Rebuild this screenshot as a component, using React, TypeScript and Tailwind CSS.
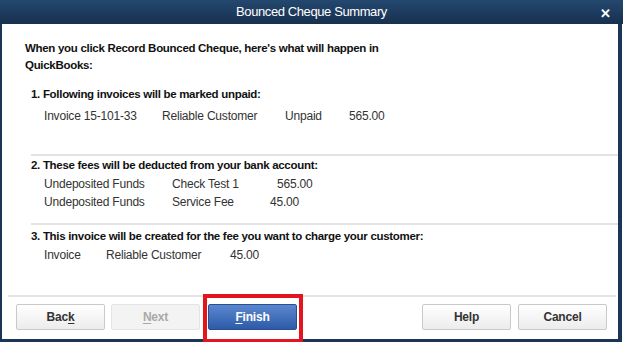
import React from "react";

const font = { fontFamily: '"Liberation Sans", Arial, sans-serif' };

function Btn({ label, u, rest, kind = "normal", className = "" }: { label?: string; u?: string; rest?: string; kind?: "normal" | "disabled" | "primary"; className?: string }) {
  const base = "h-[26px] w-[89px] rounded-[2px] text-[12px] font-bold tracking-[-0.2px] flex items-center justify-center";
  const styles =
    kind === "primary"
      ? "bg-gradient-to-b from-[#5b87cf] to-[#2d5ba8] border border-[#2a4f8f] text-white"
      : kind === "disabled"
      ? "bg-[#f3f3f3] border border-[#e4e4e4] text-[#a9a9a9]"
      : "bg-gradient-to-b from-[#ffffff] to-[#ececec] border border-[#c9c9c9] text-[#333]";
  return (
    <div className={`${base} ${styles} ${className}`}>
      {label}
      {u && <span className="underline underline-offset-2">{u}</span>}
      {rest}
    </div>
  );
}

export default function App() {
  return (
    <div className="w-[623px] h-[342px] bg-white flex flex-col" style={font}>
      {/* title bar */}
      <div className="h-[24px] bg-gradient-to-b from-[#24486f] to-[#17304f] flex items-center justify-center relative shrink-0">
        <span className="text-white text-[13px] tracking-[-0.4px]">Bounced Cheque Summary</span>
        <span className="absolute right-[12px] top-[4px] text-white text-[13px] font-bold">✕</span>
      </div>

      <div className="flex-1 flex border-l-[2px] border-r-[4px] border-b-[3px] border-[#1b3556] mr-[1px]">
        <div className="flex-1 flex flex-col pl-[23px] pt-[16px] text-[12px] text-[#222]">
          <div className="font-bold text-[11.5px] tracking-[-0.3px] leading-[17px] text-[#111]">
            When you click Record Bounced Cheque, here's what will happen in
            <br />
            QuickBooks:
          </div>

          <div className="ml-[6px] mt-[12px] tracking-[-0.2px]">
            <div className="font-bold text-[11.5px] tracking-[-0.3px] leading-[17px] text-[#111]">1. Following invoices will be marked unpaid:</div>
            <div className="flex leading-[17px] mt-[5px] pl-[13px] text-[#333]">
              <span className="w-[118px]">Invoice 15-101-33</span>
              <span className="w-[123px]">Reliable Customer</span>
              <span className="w-[64px]">Unpaid</span>
              <span>565.00</span>
            </div>

            <div className="h-[2px] bg-[#e3e3e3] mt-[29px]" />

            <div className="font-bold text-[11.5px] tracking-[-0.3px] leading-[17px] text-[#111] mt-[1px]">2. These fees will be deducted from your bank account:</div>
            <div className="flex leading-[18px] mt-[1px] pl-[13px] text-[#333]">
              <span className="w-[128px]">Undeposited Funds</span>
              <span className="w-[105px]">Check Test 1</span>
              <span>565.00</span>
            </div>
            <div className="flex leading-[18px] pl-[13px] text-[#333]">
              <span className="w-[128px]">Undeposited Funds</span>
              <span className="w-[98px]">Service Fee</span>
              <span>45.00</span>
            </div>

            <div className="h-[2px] bg-[#e3e3e3] mt-[12px]" />

            <div className="font-bold text-[11.5px] tracking-[-0.3px] leading-[17px] text-[#111] mt-[3px]">3. This invoice will be created for the fee you want to charge your customer:</div>
            <div className="flex leading-[17px] mt-[2px] pl-[13px] text-[#333]">
              <span className="w-[62px]">Invoice</span>
              <span className="w-[124px]">Reliable Customer</span>
              <span>45.00</span>
            </div>
          </div>

          <div className="flex-1" />

          <div className="h-[2px] bg-[#e3e3e3] -ml-[17px] mr-[2px]" />
          <div className="flex items-start h-[42px] pt-[7px] -ml-[9px] pr-[11px]">
            <Btn label="Bac" u="k" />
            <Btn u="N" rest="ext" kind="disabled" className="ml-[6px]" />
            <div className="relative ml-[8px]">
              <Btn u="F" rest="inish" kind="primary" />
              <div className="absolute -left-[5px] -right-[6px] -top-[10px] -bottom-[13px] border-[4px] border-[#e3151f]" />
            </div>
            <div className="flex-1" />
            <Btn label="Help" />
            <Btn label="Cancel" className="ml-[7px]" />
          </div>
        </div>
      </div>
    </div>
  );
}
